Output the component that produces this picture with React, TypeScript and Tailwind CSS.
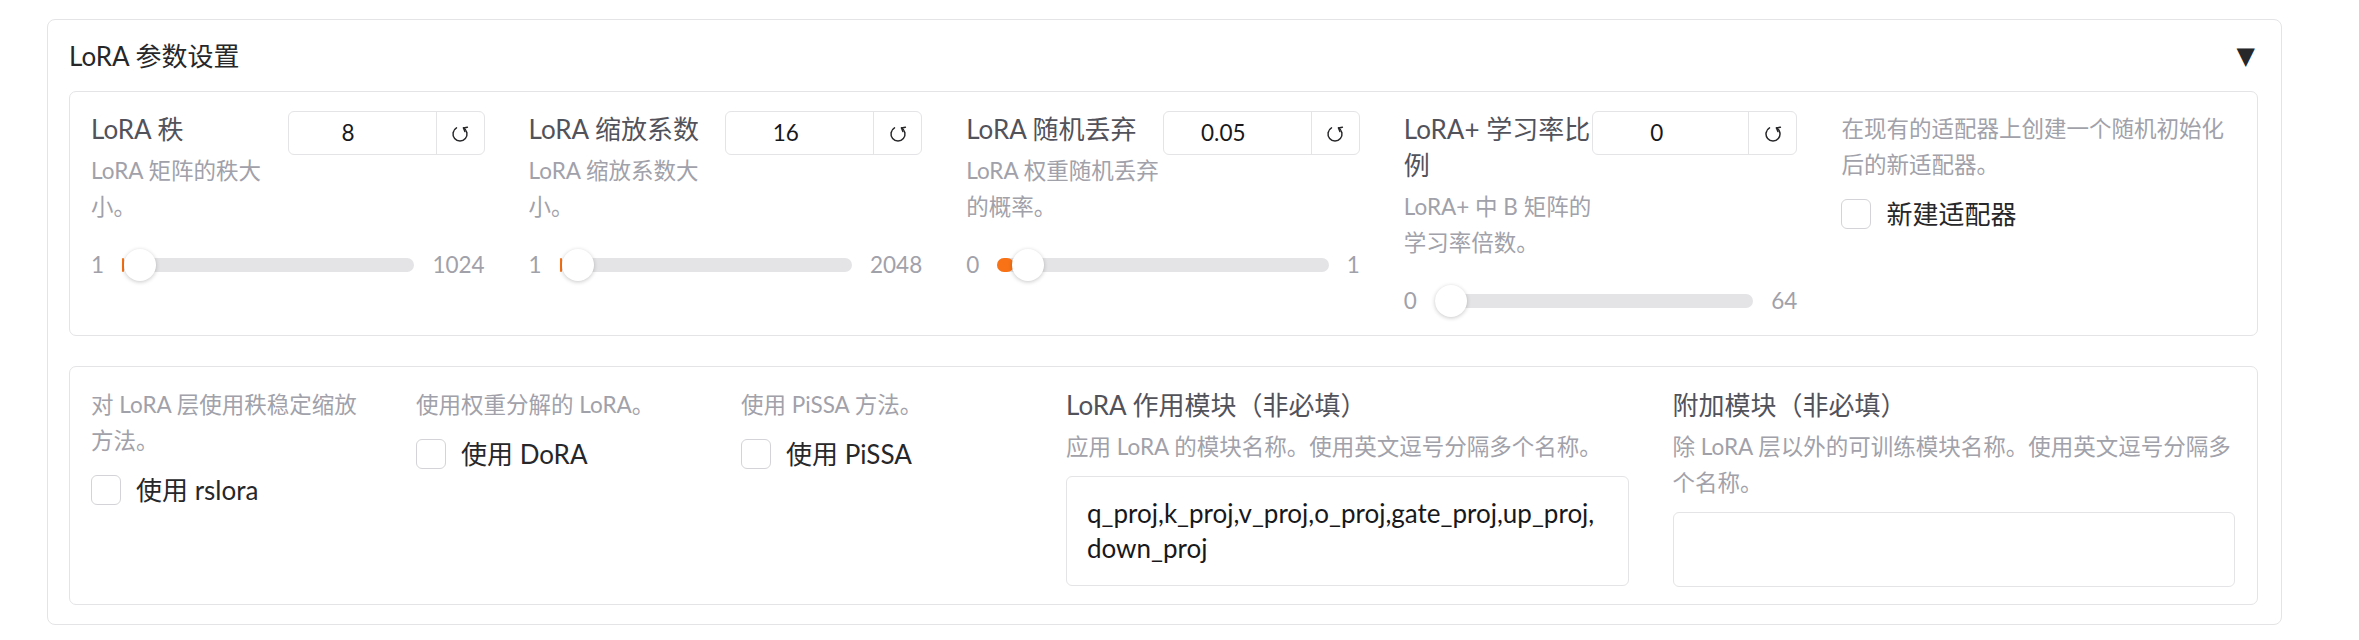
import clsx from 'clsx';

/* ---------- shared text styles ---------- */
const LABEL = "text-[26px] leading-[36px] text-[#52525b]";
const INFO = "text-[22.5px] leading-[36px] text-[#a1a1aa]";
const BODY = "text-[26px] text-[#27272a]";

function ResetIcon() {
    return (
        <svg width="20" height="20" viewBox="0 0 20 20" fill="none" stroke="#27272a" strokeWidth="1.5" strokeLinecap="round" strokeLinejoin="round">
            <path d="M6.5 4.9 A7 7 0 1 0 13.5 4.9" />
            <path d="M14.9 8.6 L13.5 4.9 L17.4 4.2" />
        </svg>
    );
}

type SliderProps = {
    label: string;
    info: string;
    value: string;
    min: number;
    max: number;
    num: number;
    wide?: boolean;
};

function SliderBlock({ label, info, value, min, max, num, wide }: SliderProps) {
    const frac = (num - min) / (max - min);
    return (
        <div className="flex flex-col">
            <div className="flex items-start">
                <div className="min-w-0 flex-1">
                    <div className={LABEL}>{label}</div>
                    <div className={clsx("mt-[6px]", INFO)}>{info}</div>
                </div>
                <div
                    className={clsx(
                        "flex h-[44px] shrink-0 overflow-hidden rounded-[6px] border border-[#e4e4e7]",
                        wide ? "w-[205px]" : "w-[197px]"
                    )}
                >
                    <input
                        readOnly
                        value={value}
                        className="min-w-0 flex-1 bg-transparent pl-[8px] pr-[36px] text-center text-[22.5px] text-[#18181b] outline-none"
                    />
                    <button className="flex w-[48px] items-center justify-center border-l border-[#e4e4e7]">
                        <ResetIcon />
                    </button>
                </div>
            </div>
            <div className="mt-[24px] flex h-[32px] items-center gap-[18px] text-[22.5px] text-[#a1a1aa]">
                <span>{min}</span>
                <div className="relative h-[14px] flex-1 rounded-full bg-[#e4e4e7]">
                    <div
                        className="absolute left-0 top-0 h-full rounded-full bg-[#f97316]"
                        style={{ width: `${frac * 100}%` }}
                    />
                    <div
                        className="absolute top-1/2 h-[32px] w-[32px] -translate-y-1/2 rounded-full bg-white shadow-[0_1px_4px_rgba(0,0,0,0.22)]"
                        style={{ left: `calc(${frac} * (100% - 32px))` }}
                    />
                </div>
                <span>{max}</span>
            </div>
        </div>
    );
}

function CheckBlock({ info, label }: { info: string; label: string }) {
    return (
        <div>
            <div className={INFO}>{info}</div>
            <label className="mt-[13px] flex h-[36px] items-center gap-[15px]">
                <input
                    type="checkbox"
                    className="h-[30px] w-[30px] shrink-0 appearance-none rounded-[6px] border border-[#d4d4d8] bg-white"
                />
                <span className={BODY}>{label}</span>
            </label>
        </div>
    );
}

function TextBlock({ label, info, children }: { label: string; info: string; children?: React.ReactNode }) {
    return (
        <div className="min-w-0">
            <div className={LABEL}>{label}</div>
            <div className={clsx("mt-[6px]", INFO)}>{info}</div>
            <div className="mt-[11px] min-h-[75px] rounded-[6px] border border-[#e4e4e7] px-[20px] py-[19px] text-[26px] leading-[35px] text-[#18181b]">
                {children}
            </div>
        </div>
    );
}

export default function App() {
    return (
        <div className="min-h-[640px] w-[2359px] bg-white pl-[47px] pt-[19px] font-['Lato','Noto_Sans_CJK_SC',sans-serif]">
            <div className="w-[2235px] rounded-[8px] border border-[#e4e4e7] pb-[19px] pl-[21px] pr-[23px] pt-[18px]">
                {/* header */}
                <div className="mb-[17px] flex h-[36px] items-center justify-between">
                    <span className="text-[26px] leading-[36px] text-[#27272a]">LoRA 参数设置</span>
                    <span className="mr-[3px] font-['DejaVu_Sans',sans-serif] text-[24px] leading-none text-[#27272a]">▼</span>
                </div>

                {/* sliders */}
                <div className="rounded-[7px] border border-[#e4e4e7] pb-[18px] pl-[21px] pr-[22px] pt-[19px]">
                    <div className="grid grid-cols-5 gap-x-[44px]">
                        <SliderBlock label="LoRA 秩" info="LoRA 矩阵的秩大小。" value="8" min={1} max={1024} num={8} />
                        <SliderBlock label="LoRA 缩放系数" info="LoRA 缩放系数大小。" value="16" min={1} max={2048} num={16} />
                        <SliderBlock label="LoRA 随机丢弃" info="LoRA 权重随机丢弃的概率。" value="0.05" min={0} max={1} num={0.05} />
                        <SliderBlock label="LoRA+ 学习率比例" info="LoRA+ 中 B 矩阵的学习率倍数。" value="0" min={0} max={64} num={0} wide />
                        <CheckBlock info="在现有的适配器上创建一个随机初始化后的新适配器。" label="新建适配器" />
                    </div>
                </div>

                {/* options */}
                <div className="mt-[30px] rounded-[7px] border border-[#e4e4e7] pb-[17px] pl-[21px] pr-[22px] pt-[20px]">
                    <div className="grid grid-cols-[281px_281px_281px_minmax(0,1fr)_minmax(0,1fr)] gap-x-[44px]">
                        <CheckBlock info="对 LoRA 层使用秩稳定缩放方法。" label="使用 rslora" />
                        <CheckBlock info="使用权重分解的 LoRA。" label="使用 DoRA" />
                        <CheckBlock info="使用 PiSSA 方法。" label="使用 PiSSA" />
                        <TextBlock label="LoRA 作用模块（非必填）" info="应用 LoRA 的模块名称。使用英文逗号分隔多个名称。">
                            q_proj,k_proj,v_proj,o_proj,gate_proj,up_proj,<wbr />down_proj
                        </TextBlock>
                        <TextBlock label="附加模块（非必填）" info="除 LoRA 层以外的可训练模块名称。使用英文逗号分隔多个名称。" />
                    </div>
                </div>
            </div>
        </div>
    );
}
